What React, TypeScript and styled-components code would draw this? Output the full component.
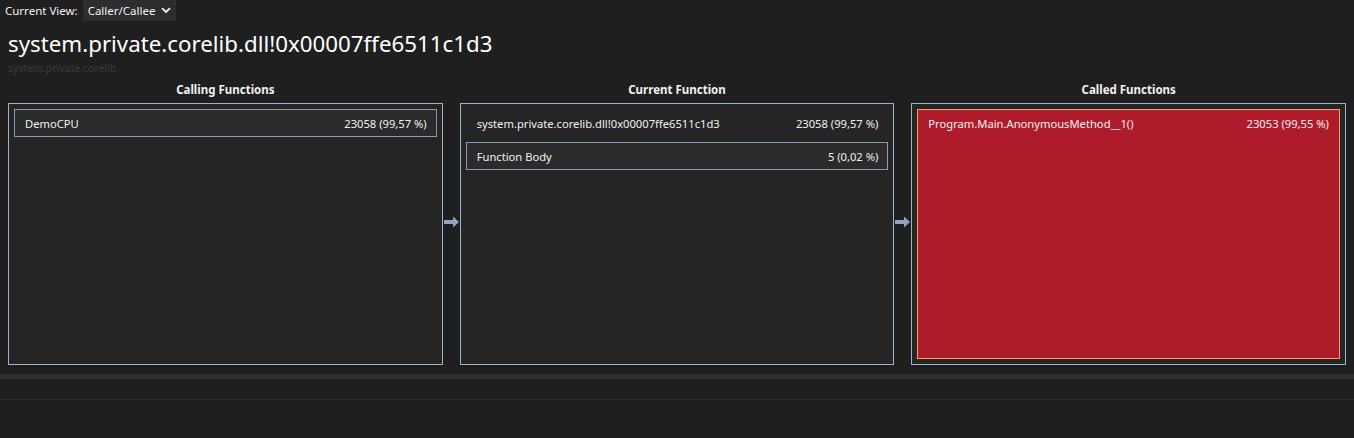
import styled, { createGlobalStyle } from 'styled-components';

const GlobalStyle = createGlobalStyle`
	html, body {
		margin: 0;
		padding: 0;
		background: #1f1f1f;
	}
	* {
		box-sizing: border-box;
	}
	body {
		font-family: 'Noto Sans', 'Open Sans', sans-serif;
		color: #f1f1f1;
	}
`;

interface FunctionRow {
	name: string;
	value: string;
}

const calling: FunctionRow[] = [{ name: 'DemoCPU', value: '23058 (99,57 %)' }];
const current: FunctionRow = {
	name: 'system.private.corelib.dll!0x00007ffe6511c1d3',
	value: '23058 (99,57 %)',
};
const body: FunctionRow = { name: 'Function Body', value: '5 (0,02 %)' };
const called: FunctionRow[] = [
	{ name: 'Program.Main.AnonymousMethod__1()', value: '23053 (99,55 %)' },
];

const Arrow = () => (
	<svg width='17' height='12' viewBox='0 0 17 12'>
		<rect x='1' y='4' width='10' height='4' fill='#8ea4be' />
		<path d='M10 0.5 L16 6 L10 11.5 Z' fill='#8ea4be' />
	</svg>
);

const App = () => {
	return (
		<Page>
			<GlobalStyle />
			<Toolbar>
				<span className='label'>Current View:</span>
				<Dropdown>
					Caller/Callee
					<svg width='10' height='7' viewBox='0 0 10 7'>
						<path d='M1 1.2 L5 5 L9 1.2' stroke='#f1f1f1' strokeWidth='1.8' fill='none' />
					</svg>
				</Dropdown>
			</Toolbar>
			<Title>system.private.corelib.dll!0x00007ffe6511c1d3</Title>
			<Subtitle>system.private.corelib</Subtitle>
			<Columns>
				<Header>Calling Functions</Header>
				<span />
				<Header>Current Function</Header>
				<span />
				<Header>Called Functions</Header>

				<Panel>
					{calling.map((row) => (
						<Row key={row.name} variant='framed'>
							<span>{row.name}</span>
							<span>{row.value}</span>
						</Row>
					))}
				</Panel>
				<ArrowCell>
					<Arrow />
				</ArrowCell>
				<Panel>
					<Row variant='plain'>
						<span>{current.name}</span>
						<span>{current.value}</span>
					</Row>
					<Row variant='framed'>
						<span>{body.name}</span>
						<span>{body.value}</span>
					</Row>
				</Panel>
				<ArrowCell>
					<Arrow />
				</ArrowCell>
				<Panel>
					{called.map((row) => (
						<Row key={row.name} variant='hot'>
							<span>{row.name}</span>
							<span>{row.value}</span>
						</Row>
					))}
				</Panel>
			</Columns>
			<Splitter />
			<BottomBar />
		</Page>
	);
};
export default App;

const Page = styled.div`
	width: 1354px;
	height: 438px;
	overflow: hidden;
	background: #1f1f1f;
	display: flex;
	flex-direction: column;
`;

const Toolbar = styled.div`
	display: flex;
	align-items: center;
	height: 21px;
	padding-left: 5px;
	gap: 5px;
	font-size: 11.5px;
	.label {
		color: #f1f1f1;
	}
`;

const Dropdown = styled.div`
	display: flex;
	align-items: center;
	gap: 6px;
	height: 21px;
	padding: 0 5px 0 5px;
	background: #2d2d30;
	color: #f1f1f1;
	font-size: 11.5px;
`;

const Title = styled.div`
	margin: 8px 0 0 8px;
	font-size: 22.3px;
	line-height: 30px;
	color: #ffffff;
`;

const Subtitle = styled.div`
	margin: 2px 0 0 8px;
	font-size: 10.5px;
	line-height: 15px;
	color: #3a3a3a;
`;

const Columns = styled.div`
	display: grid;
	grid-template-columns: 1fr 17px 1fr 17px 1fr;
	grid-template-rows: 17px 262px;
	row-gap: 5px;
	padding: 0 8px;
	margin-top: 5px;
`;

const Header = styled.div`
	text-align: center;
	font-size: 11.5px;
	font-weight: 700;
	line-height: 17px;
	color: #f1f1f1;
`;

const Panel = styled.div`
	display: flex;
	flex-direction: column;
	gap: 5px;
	padding: 5px;
	border: 1px solid #9fb3c8;
	background: #252526;
`;

const ArrowCell = styled.div`
	display: flex;
	align-items: center;
	justify-content: center;
	padding-bottom: 24px;
`;

const Row = styled.div<{ variant: 'plain' | 'framed' | 'hot' }>`
	display: flex;
	justify-content: space-between;
	align-items: ${(p) => (p.variant === 'hot' ? 'flex-start' : 'center')};
	flex: ${(p) => (p.variant === 'hot' ? '1' : '0 0 28px')};
	height: ${(p) => (p.variant === 'hot' ? 'auto' : '28px')};
	padding: ${(p) => (p.variant === 'hot' ? '6px 10px 0 10px' : '0 9px 0 10px')};
	font-size: 11.2px;
	color: #f1f1f1;
	border: 1px solid
		${(p) =>
			p.variant === 'framed' ? '#8d9cab' : p.variant === 'hot' ? '#f0a35c' : 'transparent'};
	background: ${(p) =>
		p.variant === 'framed' ? '#2b2b2c' : p.variant === 'hot' ? '#ae1c2b' : 'transparent'};
`;

const Splitter = styled.div`
	margin-top: 9px;
	height: 5px;
	background: #2d2d2d;
	border-bottom: 1px solid #333333;
`;

const BottomBar = styled.div`
	margin-top: 20px;
	flex: 1;
	border-top: 1px solid #2e2e2e;
	background: #1f1f1f;
`;
